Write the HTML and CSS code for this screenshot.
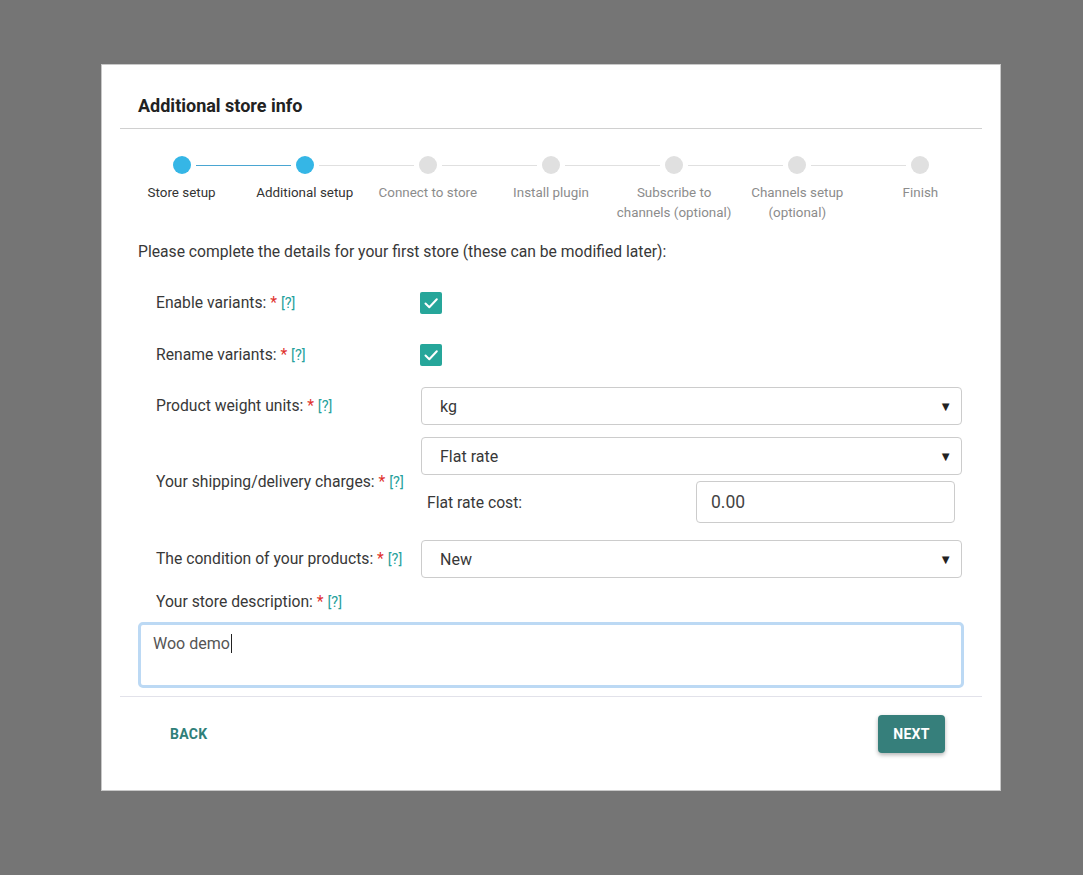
FILE: index.html
```html
<!DOCTYPE html>
<html>
<head>
<meta charset="utf-8">
<link rel="stylesheet" href="styles.css">
</head>
<body>
<div class="modal">
  <div class="header"><h1 class="title">Additional store info</h1></div>
  <div class="stepper">
    <div class="step done line-active"><span class="dot"></span><span class="slabel">Store setup</span></div>
    <div class="step done"><span class="dot"></span><span class="slabel">Additional setup</span></div>
    <div class="step"><span class="dot"></span><span class="slabel">Connect to store</span></div>
    <div class="step"><span class="dot"></span><span class="slabel">Install plugin</span></div>
    <div class="step"><span class="dot"></span><span class="slabel">Subscribe to<br>channels (optional)</span></div>
    <div class="step"><span class="dot"></span><span class="slabel">Channels setup<br>(optional)</span></div>
    <div class="step last"><span class="dot"></span><span class="slabel">Finish</span></div>
  </div>
  <div class="content">
    <p class="intro">Please complete the details for your first store (these can be modified later):</p>
    <div class="row r1">
      <div class="label">Enable variants: <span class="req">*</span> <span class="help">[?]</span></div>
      <div class="control"><span class="check"><svg viewBox="0 0 22 22" width="22" height="22"><path d="M5.5 11.5 L9.3 15.2 L16.8 7.2" fill="none" stroke="#fff" stroke-width="2" stroke-linecap="round" stroke-linejoin="round"/></svg></span></div>
    </div>
    <div class="row r2">
      <div class="label">Rename variants: <span class="req">*</span> <span class="help">[?]</span></div>
      <div class="control"><span class="check"><svg viewBox="0 0 22 22" width="22" height="22"><path d="M5.5 11.5 L9.3 15.2 L16.8 7.2" fill="none" stroke="#fff" stroke-width="2" stroke-linecap="round" stroke-linejoin="round"/></svg></span></div>
    </div>
    <div class="row r3">
      <div class="label">Product weight units: <span class="req">*</span> <span class="help">[?]</span></div>
      <div class="control"><div class="select"><span>kg</span><span class="arrow">&#9660;</span></div></div>
    </div>
    <div class="row r4">
      <div class="label">Your shipping/delivery charges: <span class="req">*</span> <span class="help">[?]</span></div>
      <div class="control">
        <div class="select"><span>Flat rate</span><span class="arrow">&#9660;</span></div>
        <div class="subrow">
          <span class="sublabel">Flat rate cost:</span>
          <div class="input">0.00</div>
        </div>
      </div>
    </div>
    <div class="row r5">
      <div class="label">The condition of your products: <span class="req">*</span> <span class="help">[?]</span></div>
      <div class="control"><div class="select"><span>New</span><span class="arrow">&#9660;</span></div></div>
    </div>
    <div class="desc-label">Your store description: <span class="req">*</span> <span class="help">[?]</span></div>
    <div class="textarea">Woo demo<span class="caret"></span></div>
  </div>
  <div class="footer">
    <span class="back">BACK</span>
    <span class="next">NEXT</span>
  </div>
</div>
</body>
</html>
```
FILE: styles.css
```css
html, body {
  margin: 0;
  padding: 0;
}
body {
  background: #757575;
  font-family: Roboto, "Liberation Sans", Arial, sans-serif;
  color: #333;
  width: 1083px;
  height: 875px;
  overflow: hidden;
}
.modal {
  box-sizing: border-box;
  margin: 64px 0 0 101px;
  width: 900px;
  height: 727px;
  background: #fff;
  border: 1px solid #c8c8c8;
  padding: 0 18px;
}
.header {
  padding: 28px 18px 10px;
  border-bottom: 1px solid #d0d0d0;
}
.title {
  margin: 0;
  font-size: 18px;
  font-weight: 700;
  line-height: 25px;
  color: #222;
}
.stepper {
  display: grid;
  grid-template-columns: repeat(7, 1fr);
  padding-top: 27px;
}
.step {
  position: relative;
  display: flex;
  flex-direction: column;
  align-items: center;
}
.step::after {
  content: "";
  position: absolute;
  top: 9px;
  left: calc(50% + 14px);
  width: calc(100% - 28px);
  height: 1px;
  background: #e0e0e0;
}
.step.last::after {
  display: none;
}
.step.line-active::after {
  background: #4aa6d2;
}
.dot {
  width: 18px;
  height: 18px;
  border-radius: 50%;
  background: #e0e0e0;
}
.step.done .dot {
  background: #35b6e6;
}
.slabel {
  margin-top: 9px;
  font-size: 13.4px;
  line-height: 20px;
  text-align: center;
  color: #8c8c8c;
  white-space: nowrap;
}
.step.done .slabel {
  color: #333;
}
.intro {
  margin: 19px 0 0 18px;
  font-size: 15.7px;
  line-height: 20px;
  color: #383838;
}
.row {
  display: flex;
  align-items: center;
  padding-left: 36px;
}
.label {
  width: 265px;
  flex: none;
  font-size: 15.7px;
  line-height: 20px;
  color: #383838;
}
.r4 .label {
  margin-top: 4px;
}
.req {
  color: #e0302c;
}
.help {
  color: #26a19c;
  font-size: 14.5px;
}
.control {
  width: 541px;
  flex: none;
}
.r1 { margin-top: 22px; height: 38px; }
.r2 { margin-top: 14px; height: 38px; }
.r3 { margin-top: 13px; }
.r4 { margin-top: 12px; }
.r5 { margin-top: 17px; }
.check {
  display: block;
  width: 22px;
  height: 22px;
  margin-left: -1px;
  border-radius: 2px;
  background: #26a69a;
}
.check svg {
  display: block;
}
.select {
  box-sizing: border-box;
  height: 38px;
  border: 1px solid #cccccc;
  border-radius: 4px;
  display: flex;
  align-items: center;
  justify-content: space-between;
  padding: 0 9px 0 18px;
  font-size: 16px;
  color: #383838;
}
.arrow {
  font-size: 13px;
  color: #222;
}
.subrow {
  display: flex;
  align-items: center;
  justify-content: space-between;
  margin-top: 6px;
  padding: 0 7px 0 6px;
}
.sublabel {
  font-size: 15.7px;
  color: #383838;
}
.input {
  box-sizing: border-box;
  width: 259px;
  height: 42px;
  border: 1px solid #cccccc;
  border-radius: 4px;
  padding: 0 14px;
  display: flex;
  align-items: center;
  font-size: 17.5px;
  color: #444;
}
.desc-label {
  margin: 14px 0 0 36px;
  font-size: 15.7px;
  line-height: 20px;
  color: #383838;
}
.textarea {
  box-sizing: border-box;
  margin: 9px 0 0 18px;
  width: 826px;
  height: 66px;
  border: 3px solid #bcd9f4;
  border-radius: 5px;
  padding: 8px 12px;
  font-size: 16px;
  line-height: 22px;
  color: #555;
}
.caret {
  display: inline-block;
  width: 1px;
  height: 19px;
  background: #222;
  vertical-align: -4px;
  margin-left: 1px;
}
.footer {
  margin-top: 8px;
  border-top: 1px solid #e2e2ea;
  display: flex;
  align-items: center;
  justify-content: space-between;
  padding: 18px 37px 0 32px;
}
.back {
  font-size: 14px;
  font-weight: 700;
  color: #2f7f79;
  letter-spacing: 0.3px;
  padding: 0 18px;
}
.next {
  box-sizing: border-box;
  width: 67px;
  height: 38px;
  border-radius: 4px;
  background: #367f7b;
  color: #fff;
  font-size: 14px;
  font-weight: 700;
  letter-spacing: 0.3px;
  display: flex;
  align-items: center;
  justify-content: center;
  box-shadow: 0 2px 4px rgba(0,0,0,0.3);
}
```
